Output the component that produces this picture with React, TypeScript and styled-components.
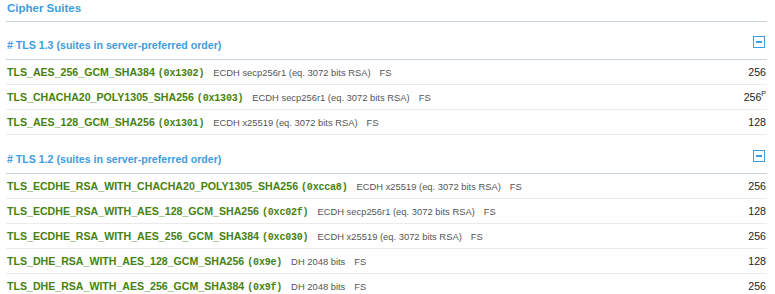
import React from "react";
import styled, { createGlobalStyle } from "styled-components";

const Global = createGlobalStyle`
  html, body { margin: 0; padding: 0; background: #fff; }
  body { font-family: "Liberation Sans", Arial, Helvetica, sans-serif; }
`;

const Page = styled.div`
  width: 761px;
  padding-left: 6px;
`;

const Title = styled.div`
  height: 21px;
  border-bottom: 1px solid #c9d3dc;
  color: #3d9ddf;
  font-weight: bold;
  font-size: 11.5px;
  line-height: 16px;
  padding-left: 1px;
`;

const Heading = styled.div<{ $h: number }>`
  height: ${(p) => p.$h}px;
  border-bottom: 1px solid #c9d3dc;
  display: flex;
  align-items: flex-end;
  justify-content: space-between;
  box-sizing: border-box;
  padding: 0 2px 7px 1px;
`;

const HeadingText = styled.span`
  color: #3d9ddf;
  font-weight: bold;
  font-size: 10.6px;
  line-height: 14px;
`;

const Toggle = styled.span`
  width: 10px;
  height: 10px;
  border: 1px solid #3d9ddf;
  display: flex;
  align-items: center;
  justify-content: center;
  margin-bottom: 4px;
  &::after {
    content: "";
    width: 6px;
    height: 2px;
    background: #3d9ddf;
  }
`;

const Row = styled.div`
  height: 24px;
  border-bottom: 1px solid #ebebeb;
  display: flex;
  align-items: center;
  padding: 0 1px 0 1px;
`;

const Name = styled.span`
  color: #45820f;
  font-weight: bold;
  font-size: 10.6px;
  white-space: nowrap;
`;

const Code = styled.span`
  font-family: "Liberation Mono", "Courier New", monospace;
  font-size: 10px;
  font-weight: bold;
  letter-spacing: -0.2px;
  margin-left: 3px;
`;

const Info = styled.span`
  color: #555;
  font-size: 9.4px;
  margin-left: 9px;
  white-space: nowrap;
`;

const Fs = styled.span`
  margin-left: 9px;
`;

const Bits = styled.span`
  margin-left: auto;
  color: #222;
  font-size: 10.6px;
`;

const Sup = styled.sup`
  font-size: 7px;
  line-height: 0;
  vertical-align: 5px;
`;

type Suite = { name: string; code: string; info: string; bits: string; p?: boolean };

const tls13: Suite[] = [
  { name: "TLS_AES_256_GCM_SHA384", code: "0x1302", info: "ECDH secp256r1 (eq. 3072 bits RSA)", bits: "256" },
  { name: "TLS_CHACHA20_POLY1305_SHA256", code: "0x1303", info: "ECDH secp256r1 (eq. 3072 bits RSA)", bits: "256", p: true },
  { name: "TLS_AES_128_GCM_SHA256", code: "0x1301", info: "ECDH x25519 (eq. 3072 bits RSA)", bits: "128" },
];

const tls12: Suite[] = [
  { name: "TLS_ECDHE_RSA_WITH_CHACHA20_POLY1305_SHA256", code: "0xcca8", info: "ECDH x25519 (eq. 3072 bits RSA)", bits: "256" },
  { name: "TLS_ECDHE_RSA_WITH_AES_128_GCM_SHA256", code: "0xc02f", info: "ECDH secp256r1 (eq. 3072 bits RSA)", bits: "128" },
  { name: "TLS_ECDHE_RSA_WITH_AES_256_GCM_SHA384", code: "0xc030", info: "ECDH x25519 (eq. 3072 bits RSA)", bits: "256" },
  { name: "TLS_DHE_RSA_WITH_AES_128_GCM_SHA256", code: "0x9e", info: "DH 2048 bits", bits: "128" },
  { name: "TLS_DHE_RSA_WITH_AES_256_GCM_SHA384", code: "0x9f", info: "DH 2048 bits", bits: "256" },
];

const SuiteRow = ({ s }: { s: Suite }) => (
  <Row>
    <Name>
      {s.name}
      <Code>({s.code})</Code>
    </Name>
    <Info>
      {s.info}
      <Fs>FS</Fs>
    </Info>
    <Bits>
      {s.bits}
      {s.p && <Sup>P</Sup>}
    </Bits>
  </Row>
);

export default function App() {
  return (
    <>
      <Global />
      <Page>
        <Title>Cipher Suites</Title>
        <Heading $h={38}>
          <HeadingText># TLS 1.3 (suites in server-preferred order)</HeadingText>
          <Toggle />
        </Heading>
        {tls13.map((s) => (
          <SuiteRow key={s.code} s={s} />
        ))}
        <Heading $h={39}>
          <HeadingText># TLS 1.2 (suites in server-preferred order)</HeadingText>
          <Toggle />
        </Heading>
        {tls12.map((s) => (
          <SuiteRow key={s.code} s={s} />
        ))}
      </Page>
    </>
  );
}
